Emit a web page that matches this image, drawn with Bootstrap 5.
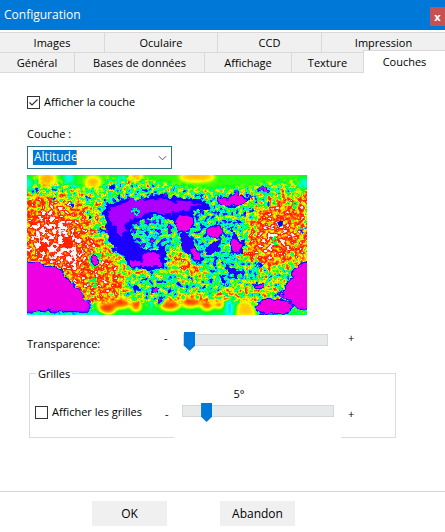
<!DOCTYPE html>
<html lang="fr">
<head>
<meta charset="utf-8">
<meta name="viewport" content="width=device-width, initial-scale=1">
<title>Configuration</title>
<link href="https://cdn.jsdelivr.net/npm/bootstrap@5.3.0/dist/css/bootstrap.min.css" rel="stylesheet">
<style>
body { font: 11px/16px "Open Sans", "Noto Sans", sans-serif; color: #000; background: #fff; }
.titlebar { background: #0078d7; color: #fff; height: 30px; padding-left: 4px; font-size: 12px; }
.close-btn { background: #c75050; color: #fff; width: 15px; height: 19px; font: bold 11px/16px "Open Sans", sans-serif; margin-top: 7px; }
.tab-row { display: grid; }
.tab-row-back { grid-template-columns: 105fr 113fr 104fr 123fr; margin-top: 2px; }
.tab-row-front { grid-template-columns: 75fr 130fr 87fr 72fr 81fr; }
.tab-btn { height: 20px; line-height: 18px; background: #f0f0f0; border: 0 solid #d9d9d9; border-width: 1px 1px 0 0; padding: 0; color: #000; white-space: nowrap; }
.tab-row-front .tab-btn { height: 21px; border-bottom-width: 1px; }
.tab-row .tab-btn:last-child { border-right: 0; }
.tab-row-front .tab-btn.active { background: #fff; height: 23px; margin-top: -2px; border-bottom: 0; border-left: 1px solid #d9d9d9; margin-left: -1px; }
.pane { padding: 21px 27px 0; }
.tick { appearance: none; width: 13px; height: 13px; border: 1px solid #333; background: #fff; margin: 0; flex: none; }
.tick:checked { background: #fff url("data:image/svg+xml,%3Csvg xmlns='http://www.w3.org/2000/svg' viewBox='0 0 11 11'%3E%3Cpath d='M1.5 5.5 4 8 9.5 2.5' fill='none' stroke='%23333' stroke-width='1.2'/%3E%3C/svg%3E"); }
.layer-label { margin-top: 16px; }
.layer-select { display: block; appearance: none; width: 145px; height: 23px; margin-top: 4px; padding: 0 20px 2px 6px; border: 1px solid #2b7189; border-radius: 0; color: #fff; font-size: 12px; line-height: 18px; outline: 0;
  background: url("data:image/svg+xml,%3Csvg xmlns='http://www.w3.org/2000/svg' viewBox='0 0 10 6'%3E%3Cpath d='M1 1 5 5 9 1' fill='none' stroke='%23444'/%3E%3C/svg%3E") right 4px center / 9px 6px no-repeat,
  linear-gradient(#d7862c, #d7862c) 48px 3px / 1px 15px no-repeat,
  linear-gradient(#0078d7, #0078d7) 5px 3px / 43px 15px no-repeat, #fff; }
.layer-select option { color: #000; }
.relief { display: block; width: 280px; height: 140px; margin-top: 6px; }
.slider-row { display: grid; grid-template-columns: 137px 19px 145px 1fr; margin-top: 15px; }
.caption { padding-top: 6px; }
.level { appearance: none; display: block; width: 100%; height: 20px; margin: 0; background: none; }
.level::-webkit-slider-runnable-track { height: 12px; background: #e7eaea; border: 1px solid #d6d6d6; }
.level::-webkit-slider-thumb { appearance: none; width: 11px; height: 19px; margin-top: -3px; background: #0078d7; clip-path: polygon(0 0, 100% 0, 100% 72%, 50% 100%, 0 72%); }
.level::-moz-range-track { height: 12px; background: #e7eaea; border: 1px solid #d6d6d6; }
.plus { padding-left: 20px; }
.grid-box { margin: 21px 22px 0 2px; border: 1px solid #dcdcdc; border-bottom: 0; padding: 0 0 0 5px; min-width: 0; position: relative; height: 65px;
  background: linear-gradient(#dcdcdc, #dcdcdc) left bottom / 144px 1px no-repeat, linear-gradient(#dcdcdc, #dcdcdc) right bottom / 54px 1px no-repeat; }
.grid-box legend { position: absolute; top: -8px; left: 6px; width: auto; float: none; margin: 0; padding: 0 2px; font-size: 11px; line-height: 16px; background: #fff; }
.grid-row { display: grid; grid-template-columns: 130px 17px 152px 1fr; padding-top: 12px; }
.grid-row .plus { padding-left: 14px; }
.sign { padding-top: 20px; }
.step-value { height: 15px; line-height: 15px; padding-right: 38px; }
.actions { border-top: 1px solid #d6d6d6; margin-top: 53px; padding: 9px 0 6px 92px; gap: 53px; }
.action-btn { width: 75px; height: 25px; background: #f0f0f0; border: 0; color: #000; padding: 0; font-size: 12px; }
</style>
<script src="https://cdn.jsdelivr.net/npm/bootstrap@5.3.0/dist/js/bootstrap.bundle.min.js"></script>
</head>
<body>
<header class="titlebar d-flex align-items-center justify-content-between">
  <span>Configuration</span>
  <button type="button" class="close-btn border-0 p-0 align-self-start flex-shrink-0" aria-label="Fermer">x</button>
</header>
<nav aria-label="Onglets">
  <div class="tab-row tab-row-back">
    <button type="button" class="tab-btn">Images</button>
    <button type="button" class="tab-btn">Oculaire</button>
    <button type="button" class="tab-btn">CCD</button>
    <button type="button" class="tab-btn">Impression</button>
  </div>
  <div class="tab-row tab-row-front">
    <button type="button" class="tab-btn">Général</button>
    <button type="button" class="tab-btn">Bases de données</button>
    <button type="button" class="tab-btn">Affichage</button>
    <button type="button" class="tab-btn">Texture</button>
    <button type="button" class="tab-btn active" aria-current="page">Couches</button>
  </div>
</nav>
<main class="pane">
  <div class="d-flex align-items-center">
    <input class="tick" type="checkbox" id="showLayer" checked>
    <label class="ps-1" for="showLayer">Afficher la couche</label>
  </div>
  <label class="layer-label d-block" for="layer">Couche :</label>
  <select class="layer-select" id="layer"><option>Altitude</option></select>

  <svg class="relief" viewBox="0 0 280 140" role="img" aria-label="Carte d'altitude">
    <defs>
      <!-- grey height field to spectrum: magenta, blue, cyan, green, yellow, red, white -->
      <filter id="spectrum" x="0" y="0" width="280" height="140" filterUnits="userSpaceOnUse" color-interpolation-filters="sRGB">
        <feComponentTransfer>
          <feFuncR type="table" tableValues="1 .85 .6 .3 .05 0 0 0 0 .5 1 1 1 1 1 1 1"/>
          <feFuncG type="table" tableValues="0 0 0 0 0 .5 1 1 1 1 1 .8 .5 .25 .1 .15 .97"/>
          <feFuncB type="table" tableValues=".8 1 1 1 1 1 1 .6 .1 0 0 0 0 0 0 .1 .97"/>
        </feComponentTransfer>
      </filter>
      <filter id="rough" x="0" y="0" width="280" height="140" filterUnits="userSpaceOnUse" color-interpolation-filters="sRGB">
        <feGaussianBlur in="SourceGraphic" stdDeviation="4" result="soft"/>
        <feTurbulence type="fractalNoise" baseFrequency=".22" numOctaves="3" seed="8"/>
        <feColorMatrix values="1 0 0 0 0  1 0 0 0 0  1 0 0 0 0  0 0 0 0 1" result="grain"/>
        <feComposite in="soft" in2="grain" operator="arithmetic" k2="1" k3="1" k4="-.5"/>
        <feColorMatrix values="1 0 0 0 0  0 1 0 0 0  0 0 1 0 0  0 0 0 0 1"/>
      </filter>
      <filter id="coast" x="-10" y="-10" width="300" height="160" filterUnits="userSpaceOnUse" color-interpolation-filters="sRGB">
        <feTurbulence type="fractalNoise" baseFrequency=".13" numOctaves="3" seed="3" result="n"/>
        <feDisplacementMap in="SourceGraphic" in2="n" scale="9" xChannelSelector="R" yChannelSelector="G"/>
        <feGaussianBlur stdDeviation=".6"/>
      </filter>
      <filter id="haze" x="-20" y="-20" width="320" height="180" filterUnits="userSpaceOnUse" color-interpolation-filters="sRGB">
        <feGaussianBlur stdDeviation="2.5"/>
      </filter>
      <clipPath id="frame"><path d="M0 0h280v140H0z"/></clipPath>
    </defs>
    <g clip-path="url(#frame)"><g filter="url(#spectrum)">
      <g filter="url(#rough)">
        <path fill="#868686" d="M-20-20h320v180H-20z"/>
        <path fill="#ccc" d="M-20 24 25 20 62 30 76 55 88 85 98 112 84 130 60 126 44 108 20 92-20 84z"/>
        <path fill="#f8f8f8" d="M8 48 18 38 35 44 54 66 54 90 40 92 15 82 6 66z"/>
        <path fill="#a0a0a0" d="M50 20 72 30 78 60 100 82 130 98 110 114 90 90 65 60z"/>
        <path fill="#6c6c6c" d="M88 48 150 20 206 32 220 54 218 84 190 94 165 86 140 92 100 92z"/>
        <path fill="#585858" d="M76 28 100 20 145 20 180 26 172 40 142 42 106 48 102 66 137 78 134 96 108 94 88 76 78 56z"/>
        <path fill="#606060" d="M104 48 134 46 142 66 120 76 106 66z"/>
        <path fill="#b8b8b8" d="M146 70 158 76 172 94 188 98 168 104 140 92z"/>
        <path fill="#c4c4c4" d="M224 46 242 26 264 20 300 22V92L266 86 240 94 212 82z"/>
        <path fill="#dedede" d="M234 50 256 40 268 70 246 82 232 70z"/>
        <path fill="#6c6c6c" d="M100 104h60v12h-60zM178 88h52v24h-52z"/>
        <path fill="#a8a8a8" d="M190 110h55v10h-55z"/>
      </g>
      <g filter="url(#coast)">
        <path fill="#3c3c3c" d="M75 36 84 28 98 24 110 26 126 20 146 22 180 26 182 34 164 38 166 48 154 58 150 46 136 42 130 40 116 44 107 48 103 54 106 64 114 72 128 76 140 70 137 91 126 96 104 93 94 80 82 66 80 50z"/>
        <path fill="#1b1b1b" d="M80 36 98 27 126 24 146 26 172 29 160 35 136 39 125 36 106 43 99 50 96 62 84 48z"/>
        <path fill="#101010" d="M104 84 113 87 122 78 134 82 134 91 104 91z"/>
        <path fill="#383838" d="M152 56 163 61 176 84 167 88 157 77zM180 70 194 66 192 77 181 81zM204 52 217 66 216 78 202 79 205 68zM198 88 208 94 216 98 210 102 200 98z"/>
        <g fill="#070707" stroke="#434343" stroke-width="1.4">
          <ellipse cx="157" cy="49" rx="9" ry="9"/><ellipse cx="188" cy="57" rx="8" ry="6.500"/><ellipse cx="209" cy="71" rx="6" ry="7"/><ellipse cx="168" cy="80" rx="5" ry="8" transform="rotate(-35 168 80)"/>
          <path d="M189 21 202 23 208 15 210 21 225 22 215 29 200 32 192 27z"/>
          <ellipse cx="236" cy="15" rx="6" ry="2"/><ellipse cx="68" cy="85" rx="4" ry="4"/><ellipse cx="128" cy="115" rx="4" ry="2"/><ellipse cx="135" cy="125" rx="4" ry="3"/><ellipse cx="231" cy="111" rx="5" ry="3"/>
          <path d="M-8 86 14 89 23 91 31 94 39 103 48 110 56 121 65 132 62 137-8 137zM292 86 274 90 266 96 263 104 257 111 252 120 262 126 270 134 292 136z"/>
        </g>
        <g fill="#404040">
          <circle cx="85" cy="12" r="3"/><circle cx="45" cy="30" r="3"/><circle cx="10" cy="16" r="2"/><circle cx="28" cy="15" r="2"/><circle cx="63" cy="43" r="2"/><circle cx="72" cy="56" r="2"/><circle cx="87" cy="76" r="2"/><circle cx="109" cy="113" r="3"/><circle cx="254" cy="49" r="3"/><circle cx="275" cy="55" r="2"/><circle cx="193" cy="14" r="2"/><circle cx="218" cy="38" r="2"/><circle cx="214" cy="50" r="2"/><circle cx="166" cy="103" r="2"/><circle cx="196" cy="107" r="3"/><circle cx="224" cy="35" r="2"/>
          <circle cx="26" cy="23" r="2"/><circle cx="60" cy="22" r="2"/><circle cx="92" cy="22" r="2"/><circle cx="240" cy="28" r="2"/><circle cx="232" cy="90" r="2"/><circle cx="176" cy="112" r="2"/><circle cx="150" cy="110" r="2"/><circle cx="118" cy="104" r="2"/>
        </g>
        <g fill="none" stroke="#777" stroke-width="2"><circle cx="68" cy="85" r="6"/><circle cx="66" cy="109" r="3"/><circle cx="249" cy="66" r="2"/><circle cx="268" cy="30" r="2"/><circle cx="109" cy="36" r="2"/></g>
        <g fill="#dcdcdc"><circle cx="17" cy="74" r="4"/><circle cx="41" cy="68" r="5"/></g>
      </g>
      <g filter="url(#haze)">
        <path fill="#858585" d="M-20-20h320V8q-40-3-80 4T130 7 80 7 38 9 0 10-20 8z"/>
        <g fill="#b4b4b4"><ellipse cx="20" cy="4" rx="9" ry="8"/><ellipse cx="66" cy="7" rx="8" ry="6"/><ellipse cx="109" cy="0" rx="6" ry="7"/><ellipse cx="170" cy="2" rx="18" ry="5"/></g>
        <g fill="#616161"><ellipse cx="42" cy="2" rx="5" ry="8"/><ellipse cx="1" cy="9" rx="4" ry="7"/><ellipse cx="92" cy="4" rx="4" ry="4"/><ellipse cx="277" cy="8" rx="5" ry="5"/></g>
        <path fill="#787878" d="M64 130 84 125 103 130 125 129 160 132 200 126 280 137V160H-20V138l84 0z"/>
        <path fill="#5c5c5c" d="M-20 138h90l4-8 5 0v30h-99z"/>
        <g fill="#d2d2d2"><ellipse cx="80" cy="133" rx="9" ry="6"/><ellipse cx="94" cy="128" rx="9" ry="5"/><ellipse cx="109" cy="131" rx="5" ry="5"/><ellipse cx="143" cy="130" rx="10" ry="5"/><ellipse cx="164" cy="127" rx="10" ry="5"/><ellipse cx="180" cy="130" rx="6" ry="5"/><ellipse cx="192" cy="129" rx="5" ry="4"/></g>
        <path fill="#b0b0b0" d="M212 126h12l6 16h-22z"/>
        <path fill="#555" d="M198 126h8v16h-6z"/>
      </g>
      <g filter="url(#coast)"><path fill="#050505" stroke="#444" stroke-width="1.500" d="M230 133q0-7 10-8l15 0q10 3 11 8t-12 6h-16q-8-1-8-6z"/></g>
    </g></g>
  </svg>

  <div class="slider-row">
    <label class="caption" for="opacity">Transparence:</label>
    <span>-</span>
    <input class="level" id="opacity" type="range" min="0" max="100" value="0">
    <span class="plus">+</span>
  </div>

  <fieldset class="grid-box">
    <legend>Grilles</legend>
    <div class="grid-row">
      <div class="d-flex align-items-center pt-3">
        <input class="tick" type="checkbox" id="showGrid">
        <label class="ps-1 text-nowrap" for="showGrid">Afficher les grilles</label>
      </div>
      <span class="sign">-</span>
      <div>
        <output class="step-value d-block text-center" for="step">5°</output>
        <input class="level" id="step" type="range" min="0" max="100" value="13" aria-label="Pas de la grille">
      </div>
      <span class="plus sign">+</span>
    </div>
  </fieldset>
</main>
<footer class="actions d-flex">
  <button type="button" class="action-btn">OK</button>
  <button type="button" class="action-btn">Abandon</button>
</footer>
</body>
</html>
